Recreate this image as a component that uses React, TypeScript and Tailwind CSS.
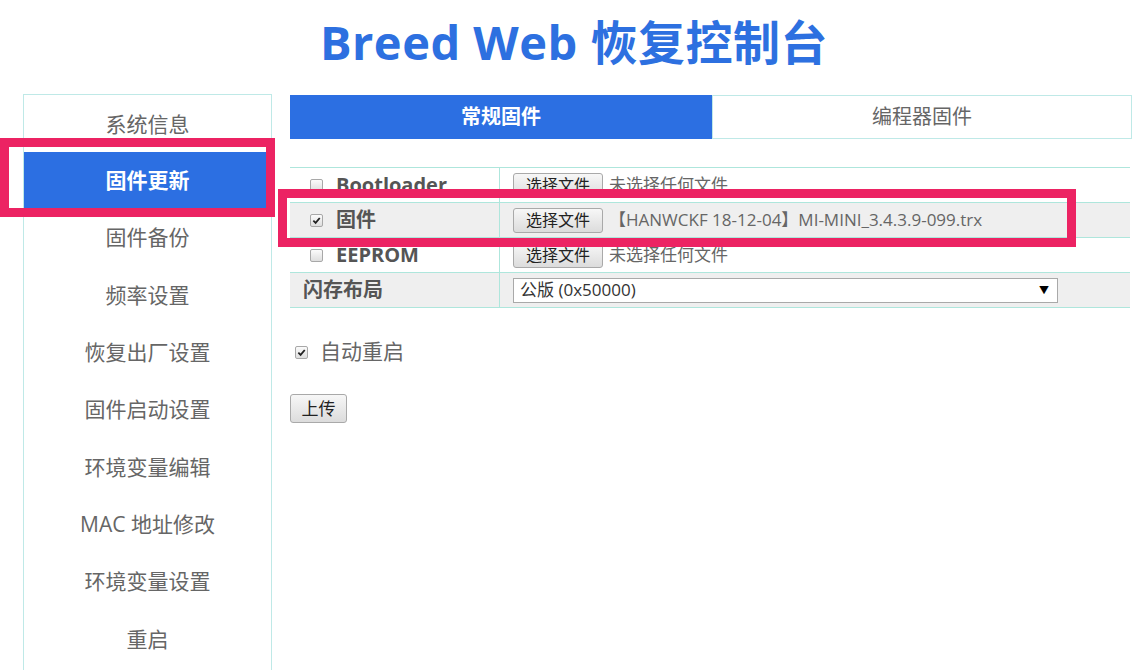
import React from 'react';

const MENU = ['系统信息', '固件更新', '固件备份', '频率设置', '恢复出厂设置', '固件启动设置', '环境变量编辑', 'MAC 地址修改', '环境变量设置', '重启'];

const FONT = "font-['Open_Sans','Noto_Sans_CJK_SC',sans-serif]";

const Check: React.FC<{ checked?: boolean; className?: string }> = ({ checked, className }) => (
    <span className={`inline-flex items-center justify-center w-[13px] h-[13px] border border-[#a8a8a8] rounded-[2px] bg-gradient-to-b from-[#fbfbfb] to-[#dedede] ${className ?? ''}`}>
        {checked && (
            <svg viewBox="0 0 10 10" className="w-[9px] h-[9px]">
                <path d="M1.5 5.2 L4 7.6 L8.6 2.2" fill="none" stroke="#222" strokeWidth="2" />
            </svg>
        )}
    </span>
);

const FileButton: React.FC = () => (
    <button className="h-[25px] w-[90px] border border-[#a9a9a9] rounded-[3px] bg-gradient-to-b from-[#f7f7f7] to-[#dcdcdc] text-[16px] text-[#222] leading-none">
        选择文件
    </button>
);

const App: React.FC = () => {
    const rows = [
        { label: 'Bootloader', checked: false, file: '未选择任何文件', gray: false },
        { label: '固件', checked: true, file: '【HANWCKF 18-12-04】MI-MINI_3.4.3.9-099.trx', gray: true },
        { label: 'EEPROM', checked: false, file: '未选择任何文件', gray: false },
    ];

    return (
        <div className={`relative w-[1148px] h-[670px] overflow-hidden bg-white ${FONT}`}>
            {/* Title */}
            <h1 className="pt-[14px] text-center text-[47px] leading-[56px] font-bold text-[#2d70e0] tracking-[0.5px]">
                Breed Web 恢复控制台
            </h1>

            <div className="flex mt-[24px]">
                {/* Sidebar */}
                <div className="ml-[23px] w-[249px] h-[600px] border border-[#bfe9e7] flex flex-col">
                    {MENU.map((item, i) => (
                        <div
                            key={item}
                            className={`h-[57.3px] shrink-0 flex items-center justify-center text-[21px] ${
                                i === 1 ? 'bg-[#2c6fe2] text-white font-bold' : 'text-[#666]'
                            } ${i === 0 ? 'pt-[2px]' : ''}`}
                        >
                            {item}
                        </div>
                    ))}
                </div>

                {/* Main */}
                <div className="ml-[18px] w-[842px]">
                    <div className="flex h-[44px] mt-[1px]">
                        <div className="w-[422px] bg-[#2c6fe2] flex items-center justify-center text-[20px] font-bold text-white">
                            常规固件
                        </div>
                        <div className="flex-1 border border-[#bfe9e7] flex items-center justify-center text-[20px] text-[#666]">
                            编程器固件
                        </div>
                    </div>

                    <div className="mt-[28px] w-[840px] border-b border-[#aee6dc]">
                        {rows.map(r => (
                            <div key={r.label} className={`flex h-[35px] border-t border-[#aee6dc] ${r.gray ? 'bg-[#efefef]' : 'bg-white'}`}>
                                <div className="w-[210px] border-r border-[#aee6dc] flex items-center pl-[20px]">
                                    <Check checked={r.checked} />
                                    <span className="ml-[13px] text-[20px] font-bold text-[#555]">{r.label}</span>
                                </div>
                                <div className="flex-1 flex items-center pl-[13px]">
                                    <FileButton />
                                    <span className="ml-[6px] text-[17px] text-[#666]">{r.file}</span>
                                </div>
                            </div>
                        ))}
                        <div className="flex h-[35px] border-t border-[#aee6dc] bg-[#efefef]">
                            <div className="w-[210px] border-r border-[#aee6dc] flex items-center pl-[13px] text-[20px] font-bold text-[#555]">
                                闪存布局
                            </div>
                            <div className="flex-1 flex items-center pl-[13px]">
                                <div className="w-[545px] h-[25px] border border-[#a9a9a9] bg-white flex items-center justify-between pl-[6px] pr-[8px]">
                                    <span className="text-[17px] text-[#333]">公版 (0x50000)</span>
                                    <span className="text-[10px] text-black">▼</span>
                                </div>
                            </div>
                        </div>
                    </div>

                    <div className="mt-[34px] flex items-center h-[20px] pl-[5px]">
                        <Check checked />
                        <span className="ml-[12px] text-[21px] text-[#666]">自动重启</span>
                    </div>

                    <button className="mt-[32px] w-[57px] h-[29px] border border-[#a9a9a9] rounded-[3px] bg-gradient-to-b from-[#f7f7f7] to-[#dcdcdc] text-[17px] text-[#222]">
                        上传
                    </button>
                </div>
            </div>

            {/* Annotation highlight boxes */}
            <div className="absolute left-0 top-[138px] w-[275px] h-[79px] border-[9px] border-[#ec2363]" />
            <div className="absolute left-[278px] top-[189px] w-[798px] h-[58px] border-[9px] border-[#ec2363]" />
        </div>
    );
};

export default App;
